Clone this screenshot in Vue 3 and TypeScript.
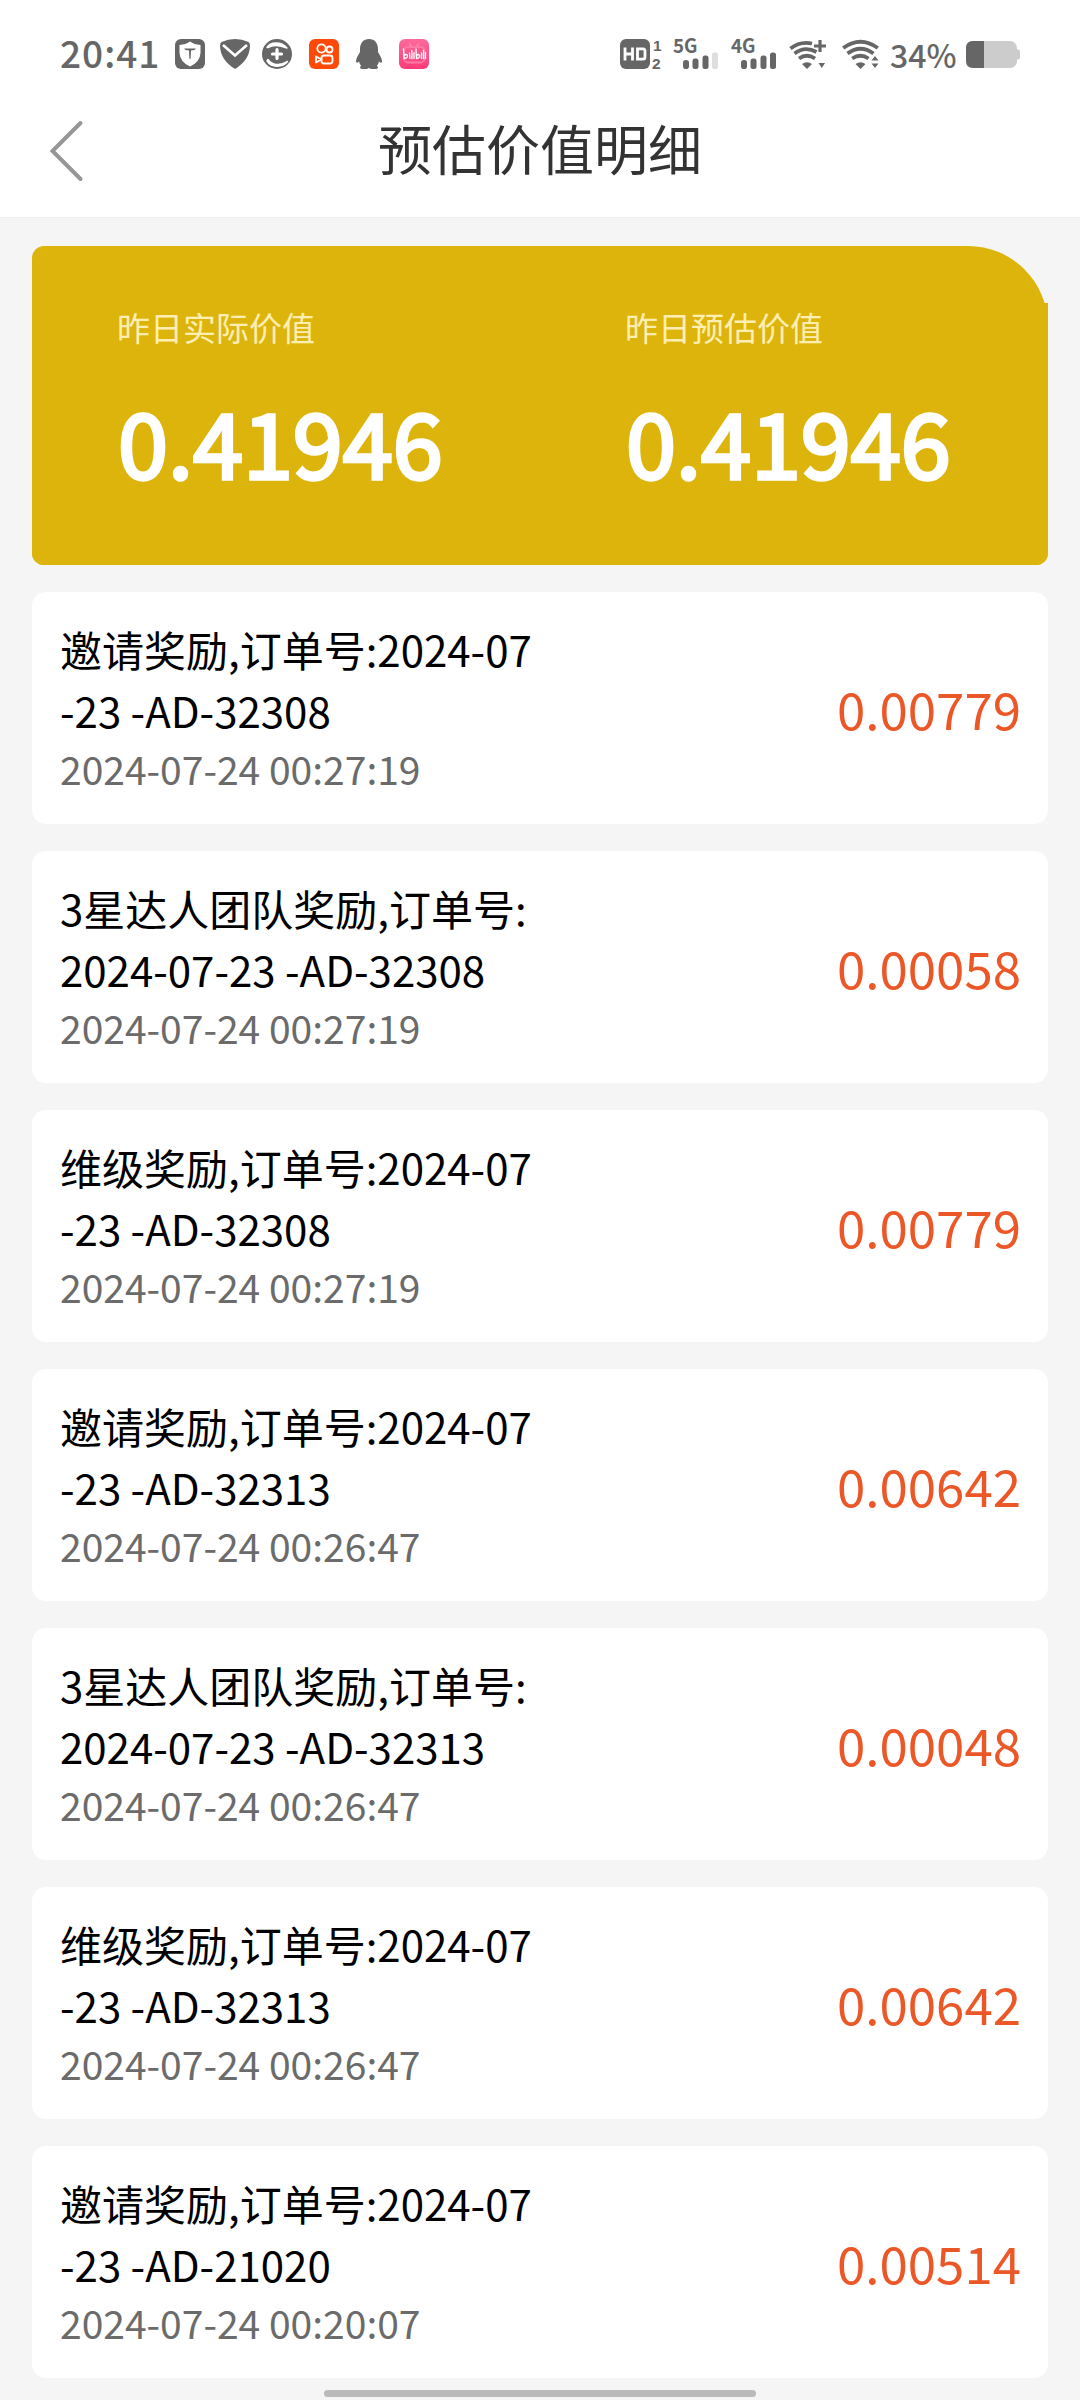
<script setup lang="ts">
interface SummaryFigure {
  label: string
  value: string
}

interface RewardRecord {
  lines: string[]
  time: string
  amount: string
}

const figures: SummaryFigure[] = [
  { label: '昨日实际价值', value: '0.41946' },
  { label: '昨日预估价值', value: '0.41946' },
]

const invite = (order: string): string[] => ['邀请奖励,订单号:2024-07', `-23 -AD-${order}`]
const team = (order: string): string[] => ['3星达人团队奖励,订单号:', `2024-07-23 -AD-${order}`]
const level = (order: string): string[] => ['维级奖励,订单号:2024-07', `-23 -AD-${order}`]

const records: RewardRecord[] = [
  { lines: invite('32308'), time: '2024-07-24 00:27:19', amount: '0.00779' },
  { lines: team('32308'), time: '2024-07-24 00:27:19', amount: '0.00058' },
  { lines: level('32308'), time: '2024-07-24 00:27:19', amount: '0.00779' },
  { lines: invite('32313'), time: '2024-07-24 00:26:47', amount: '0.00642' },
  { lines: team('32313'), time: '2024-07-24 00:26:47', amount: '0.00048' },
  { lines: level('32313'), time: '2024-07-24 00:26:47', amount: '0.00642' },
  { lines: invite('21020'), time: '2024-07-24 00:20:07', amount: '0.00514' },
]
</script>

<template>
  <div class="page">
    <div class="status">
      <span class="clock">20:41</span>
      <div class="apps">
        <svg class="app" viewBox="0 0 30 30">
          <rect width="30" height="30" rx="6" fill="#666" />
          <path d="M15 2.500Q19 5.500 25.500 6V14Q25 23 15 27.500Q5 23 4.500 14V6Q11 5.500 15 2.500Z" fill="#fff" />
          <path d="M9 9.500H21L19.500 11L16 11.500L15.700 19L15 20.500L14.300 19L14 11.500L10.500 11Z" fill="#666" />
        </svg>
        <svg class="app" viewBox="0 0 30 30">
          <path d="M15 0Q22 0 28.500 3Q30 4 30 7Q29.500 21 15 30Q.5 21 0 7Q0 4 1.500 3Q8 0 15 0Z" fill="#666" />
          <path d="M3 6L15 16.500L27 6" fill="none" stroke="#fff" stroke-width="2.600" />
        </svg>
        <svg class="app swirl" viewBox="0 0 30 30">
          <circle cx="15" cy="15" r="15" fill="#666" />
          <path d="M5 8.500C8 3 19 2 25 9C18 6 11 5.500 6 8.500Z" fill="#fff" stroke="#fff" stroke-width="1.500" stroke-linejoin="round" />
          <path d="M6 20.500C9 25.500 17 28 25.500 22.500C21 28.500 9 29 5 22Z" fill="#fff" stroke="#fff" stroke-width="1.500" stroke-linejoin="round" />
          <path d="M15 10.500V19.500M10.500 15H19.500" stroke="#fff" stroke-width="3.200" stroke-linecap="round" />
        </svg>
        <svg class="app kuai" viewBox="0 0 30 30">
          <rect width="30" height="30" rx="6" fill="#fe4a08" />
          <g fill="none" stroke="#fff" stroke-width="1.800">
            <circle cx="12.500" cy="9.500" r="4.200" />
            <circle cx="20.500" cy="10.500" r="3" />
            <rect x="12.500" y="16.500" width="11" height="8" rx="2.500" />
            <path d="M7 17.500L12.500 20.500L7 23.500Z" stroke-linejoin="round" />
          </g>
        </svg>
        <svg class="app" viewBox="0 0 30 30">
          <path d="M15 0C20.500 0 24 4 24 10V13C25.500 16 28 19 28 22.500Q27.500 25 25 22.500Q24.500 25 23 26.500L24 28.500Q24 30 21.500 30H17L15 29L13 30H8.500Q6 30 6 28.500L7 26.500Q5.500 25 5 22.500Q2.500 25 2 22.500C2 19 4.500 16 6 13V10C6 4 9.500 0 15 0Z" fill="#666" />
        </svg>
        <svg class="app" viewBox="0 0 30 30">
          <defs>
            <linearGradient id="pink" x1="0" y1="0" x2="0" y2="1">
              <stop offset="0" stop-color="#fd6a9c" />
              <stop offset="1" stop-color="#fd3b78" />
            </linearGradient>
          </defs>
          <rect width="30" height="30" rx="6" fill="url(#pink)" />
          <path d="M10.500 5L13 8M19.500 5L17 8" stroke="#fd86ad" stroke-width="1.600" stroke-linecap="round" />
          <rect x="5" y="8" width="20.500" height="15.500" rx="4" fill="none" stroke="#fd7aa4" stroke-width="1.800" />
          <path d="M4.500 10L5 19.500Q9 19 8.500 16.500Q7.500 14.500 5 16.500M10.500 14L11 19.500M12.800 11.500L13 19.500M15 13.500V19.500M17 10L17.500 19.500Q21 19 20.500 16.500Q19.500 14.500 17.500 16.500M22.500 14V19.500M24.500 11.500V19.500M26.500 13.500V19.500" fill="none" stroke="#fff" stroke-width="1.300" stroke-linecap="round" />
        </svg>
      </div>
      <div class="signals">
        <svg class="hd" width="43" height="48" viewBox="0 -8 43 48">
          <rect y="1" width="30" height="30" rx="6" fill="#666" />
          <path d="M5 9.500V22.500M12.500 9.500V22.500M5 16H12.500" fill="none" stroke="#fff" stroke-width="2.800" />
          <path d="M17.500 10.800H23Q25 10.800 25 13V19Q25 21.200 23 21.200H17.500Z" fill="none" stroke="#fff" stroke-width="2.800" />
          <text x="33" y="12.500" class="sim">1</text>
          <text x="32" y="31" class="sim">2</text>
        </svg>
        <svg class="cell" width="46" height="48" viewBox="0 -8 46 48">
          <text x="0" y="15" textLength="24.500" lengthAdjust="spacingAndGlyphs" class="network">5G</text>
          <g fill="#666">
            <rect x="10" y="22" width="6" height="9" rx="2.800" />
            <rect x="19.500" y="20.500" width="6" height="10.500" rx="2.500" />
            <rect x="29.500" y="17.500" width="6" height="13.500" rx="2.500" />
            <rect x="39" y="14.500" width="6" height="16.500" rx="2" fill="#dedede" />
          </g>
        </svg>
        <svg class="cell" width="46" height="48" viewBox="0 -8 46 48">
          <text x="0" y="15" textLength="24.500" lengthAdjust="spacingAndGlyphs" class="network">4G</text>
          <g fill="#666">
            <rect x="10" y="22" width="6" height="9" rx="2.800" />
            <rect x="19.500" y="20.500" width="6" height="10.500" rx="2.500" />
            <rect x="29.500" y="17.500" width="6" height="13.500" rx="2.500" />
            <rect x="39" y="14.500" width="6" height="16.500" rx="2.500" />
          </g>
        </svg>
        <svg class="wifi-a" width="38" height="32" viewBox="0 0 38 32">
          <g fill="none" stroke="#666" stroke-width="3.800">
            <path d="M1.500 10.500Q11 3 23 5.500" />
            <path d="M5.500 15.500Q16 7.500 27.500 14" />
            <path d="M10 20.500Q18 15 26 20.500" />
          </g>
          <path d="M13 26Q18 22.500 23 26L18 31Z" fill="#666" />
          <path d="M31 2V14M25 8H37" stroke="#666" stroke-width="3.200" />
          <path d="M29.500 25H36L32.800 30Z" fill="#666" />
        </svg>
        <svg class="wifi-b" width="38" height="32" viewBox="0 0 38 32">
          <g fill="none" stroke="#666" stroke-width="3.800">
            <path d="M1.200 10Q18.500 -2.500 35.800 10" />
            <path d="M5.500 15.500Q18.500 6 31.500 15.500" />
            <path d="M10.200 20.500Q18.500 15 26.500 20.500" />
          </g>
          <path d="M13.500 26Q18.500 22.500 23.500 26L18.500 31Z" fill="#666" />
          <path d="M29.500 22.500L33 18L36.500 22.500ZM29.500 25.500H36.500L33 30Z" fill="#666" />
        </svg>
        <span class="percent">34%</span>
        <svg class="battery" width="54" height="27" viewBox="0 0 54 27">
          <rect x="48" y="8.500" width="6" height="10" rx="2" fill="#ccc" />
          <rect width="51" height="27" rx="7" fill="#ccc" />
          <path d="M18 0V27H7Q0 27 0 20V7Q0 0 7 0Z" fill="#666" />
        </svg>
      </div>
    </div>

    <header class="nav">
      <svg class="back" width="36" height="62" viewBox="0 0 36 62">
        <path d="M31.500 3L3.500 31L31.500 59" fill="none" stroke="#969696" stroke-width="4" stroke-linecap="round" />
      </svg>
      <h1 class="title">预估价值明细</h1>
    </header>

    <main class="content">
      <section class="summary">
        <div class="figures">
          <div v-for="figure in figures" :key="figure.label" class="figure">
            <span class="label">{{ figure.label }}</span>
            <span class="value">{{ figure.value }}</span>
          </div>
        </div>
      </section>

      <article v-for="(record, index) in records" :key="index" class="record">
        <div class="info">
          <div v-for="line in record.lines" :key="line" class="line">{{ line }}</div>
          <div class="time">{{ record.time }}</div>
        </div>
        <span class="amount">{{ record.amount }}</span>
      </article>
    </main>
    <div class="handle"></div>
  </div>
</template>

<style>
body {
  margin: 0;
  background: #f5f5f5;
}
</style>

<style scoped>
.page {
  display: flex;
  flex-direction: column;
  box-sizing: border-box;
  width: 1080px;
  height: 2400px;
  overflow: hidden;
  background: #f5f5f5;
  font-family: "Noto Sans CJK SC", sans-serif;
}

.status {
  display: flex;
  align-items: center;
  box-sizing: border-box;
  height: 108px;
  padding: 0 60px;
  background: #fff;
  color: #666;
}

.clock {
  width: 115px;
  padding-bottom: 5px;
  font-size: 37px;
  line-height: 54px;
  font-weight: 500;
  letter-spacing: 1px;
}

.apps {
  display: flex;
  gap: 15px;
}

.app {
  display: block;
  width: 30px;
  height: 30px;
}

.swirl {
  margin-left: -3px;
}

.kuai {
  margin-left: 2px;
}

.signals {
  display: flex;
  align-items: center;
  margin-left: auto;
}

.sim {
  font-family: "Liberation Sans", sans-serif;
  font-size: 15.5px;
  font-weight: 700;
  fill: #666;
}

.network {
  font-size: 19.5px;
  font-weight: 700;
  fill: #666;
}

.hd {
  margin-right: 10px;
}

.cell {
  margin-right: 12px;
}

.wifi-a {
  margin-right: 15px;
}

.wifi-b {
  margin-right: 10px;
}

.percent {
  width: 76px;
  font-size: 32px;
  line-height: 46px;
  font-weight: 500;
}

.nav {
  display: flex;
  align-items: center;
  box-sizing: border-box;
  height: 110px;
  padding: 0 49px 23px;
  border-bottom: 1px solid #efefef;
  background: #fff;
}

.back {
  flex: none;
}

.title {
  flex: 1;
  margin: 0 36px 0 0;
  padding-bottom: 6px;
  color: #333;
  font-size: 54px;
  font-weight: 400;
  line-height: 78px;
  text-align: center;
}

.content {
  display: flex;
  flex-direction: column;
  gap: 27px;
  padding: 28px 32px 0;
}

.summary {
  padding-top: 57px;
  border-radius: 12px 80px 12px 12px;
  background: #ddb40c;
}

/* The figures panel keeps its own square top corners over the large card radius. */
.figures {
  display: flex;
  box-sizing: border-box;
  height: 262px;
  border-radius: 0 0 12px 12px;
  background: #ddb40c;
}

.figure {
  display: flex;
  flex: 1;
  flex-direction: column;
  gap: 24px;
  padding-left: 85px;
}

.label {
  color: #fdeeb2;
  font-size: 33px;
  line-height: 48px;
}

.value {
  margin-left: 1px;
  color: #fff;
  font-size: 90px;
  line-height: 130px;
  -webkit-text-stroke: 3.5px #fff;
}

.record {
  display: flex;
  align-items: center;
  justify-content: space-between;
  box-sizing: border-box;
  height: 232px;
  padding: 0 27px 0 28px;
  border-radius: 14px;
  background: #fff;
}

.info {
  padding-bottom: 3px;
}

.line {
  color: #000;
  font-size: 42px;
  line-height: 61px;
  white-space: nowrap;
}

.time {
  color: #6b6b6b;
  font-size: 39px;
  line-height: 56px;
}

.amount {
  padding-bottom: 1px;
  color: #ec5728;
  font-size: 51px;
  line-height: 74px;
}

.handle {
  width: 432px;
  height: 7px;
  margin: 12px auto 0;
  border-radius: 4px;
  background: #bababa;
}
</style>
